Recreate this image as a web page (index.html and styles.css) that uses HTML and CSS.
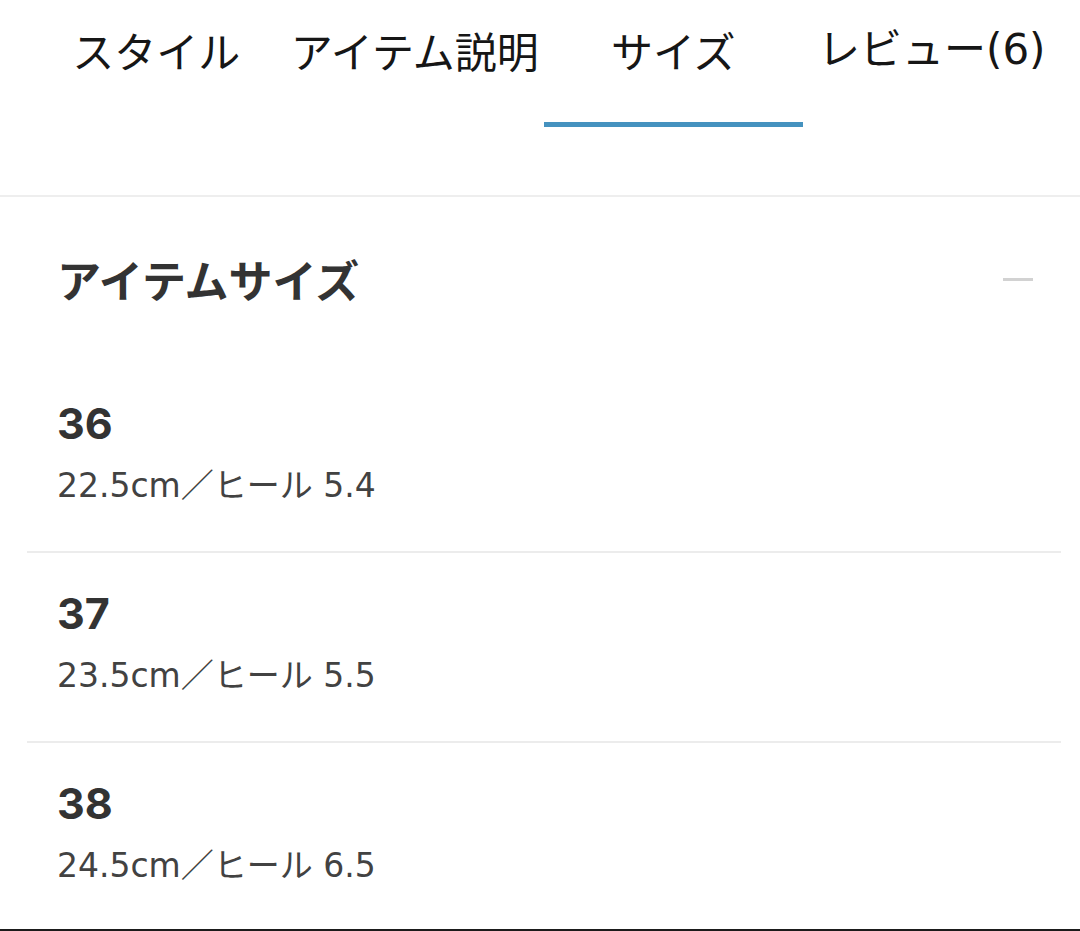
FILE: index.html
```html
<!DOCTYPE html>
<html lang="ja">
<head>
<meta charset="utf-8">
<title>サイズ</title>
<link rel="stylesheet" href="styles.css">
</head>
<body>
<div class="page">
  <header class="header">
    <nav class="tabs">
      <div class="tab">スタイル</div>
      <div class="tab">アイテム説明</div>
      <div class="tab active">サイズ</div>
      <div class="tab">レビュー(6)</div>
    </nav>
  </header>
  <section class="section">
    <div class="section-head">
      <h2 class="section-title">アイテムサイズ</h2>
      <span class="minus"></span>
    </div>
    <ul class="sizes">
      <li class="size-row">
        <div class="size-num">36</div>
        <div class="size-detail">22.5cm／ヒール 5.4</div>
      </li>
      <li class="size-row">
        <div class="size-num">37</div>
        <div class="size-detail">23.5cm／ヒール 5.5</div>
      </li>
      <li class="size-row">
        <div class="size-num">38</div>
        <div class="size-detail">24.5cm／ヒール 6.5</div>
      </li>
    </ul>
  </section>
  <div class="bottom-bar"></div>
</div>
</body>
</html>
```

FILE: styles.css
```css
* {
  box-sizing: border-box;
}

html, body {
  margin: 0;
  padding: 0;
  background: #ffffff;
}

body {
  width: 1080px;
  height: 931px;
  overflow: hidden;
  font-family: "DejaVu Sans", "Noto Sans CJK JP", sans-serif;
  color: #333333;
}

.page {
  display: flex;
  flex-direction: column;
  height: 931px;
}

.header {
  height: 197px;
  border-bottom: 2px solid #eeeeee;
}

.tabs {
  display: grid;
  grid-template-columns: repeat(4, 1fr);
  margin: 0 19px 0 27px;
}

.tab {
  font-family: "Noto Sans CJK JP", sans-serif;
  font-size: 42px;
  line-height: 42px;
  color: #161616;
  text-align: center;
  padding: 29px 0 51px;
  border-bottom: 5px solid transparent;
  white-space: nowrap;
}

.tab:last-child {
  font-family: "DejaVu Sans", "Noto Sans CJK JP", sans-serif;
}

.tab.active {
  border-bottom-color: #4592bf;
}

.section {
  flex: 1;
  display: flex;
  flex-direction: column;
}

.section-head {
  display: flex;
  align-items: center;
  justify-content: space-between;
  padding: 0 47px 0 57px;
  margin-top: 60px;
}

.section-title {
  margin: 0;
  font-family: "Noto Sans CJK JP", sans-serif;
  font-weight: 700;
  font-size: 44px;
  line-height: 44px;
  color: #333333;
}

.minus {
  display: block;
  width: 30px;
  height: 3px;
  background: #d2d2d2;
}

.sizes {
  list-style: none;
  margin: 62px 19px 0 27px;
  padding: 0;
}

.size-row {
  padding: 35px 0 45px 30px;
}

.size-row + .size-row {
  border-top: 2px solid #ececec;
}

.size-row:last-child {
  padding-bottom: 41px;
}

.size-num {
  font-family: Inter, "Liberation Sans", sans-serif;
  font-weight: 700;
  font-size: 43px;
  line-height: 50px;
  color: #333333;
}

.size-detail {
  margin-top: 18px;
  font-size: 33px;
  line-height: 40px;
  color: #424242;
  white-space: nowrap;
}

.bottom-bar {
  height: 2px;
  background: #1b1b1b;
}
```
